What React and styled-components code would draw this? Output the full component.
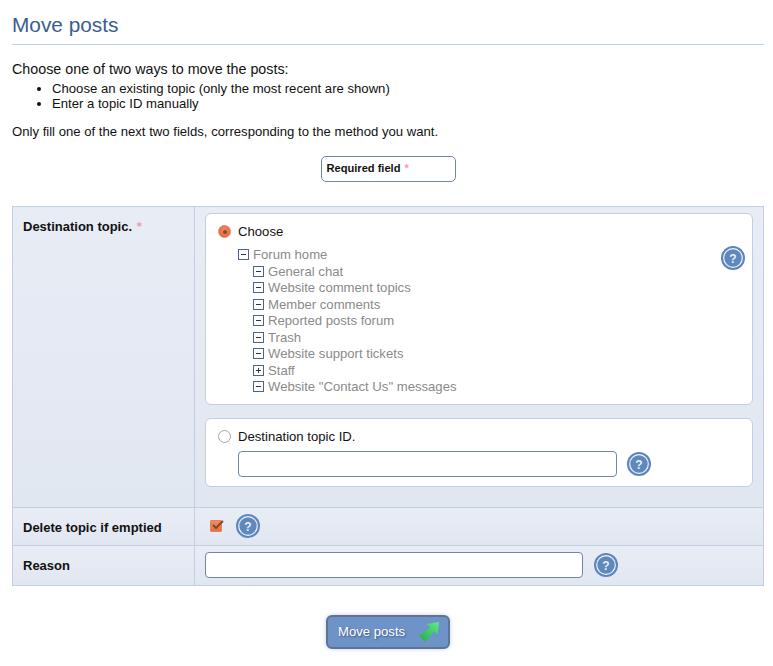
import React from 'react';
import styled, { createGlobalStyle } from 'styled-components';

const Global = createGlobalStyle`
  html, body { margin: 0; padding: 0; background: #fff; }
  body { font-family: "Liberation Sans", Arial, sans-serif; font-size: 13.13px; color: #111; }
`;
const Page = styled.div`
  padding: 13px 9px 0 12px;
  width: 773px; height: 666px; box-sizing: border-box; overflow: hidden;
`;
const Title = styled.h1`
  margin: 0 0 16px; padding: 0 0 8px;
  font-size: 20.8px; line-height: 23px; font-weight: 400; color: #395d92;
  border-bottom: 1px solid #bcd0e6;
`;
const Lead = styled.p`
  margin: 0 0 4px; font-size: 14.3px; line-height: 16px; color: #111;
`;
const Bullets = styled.ul`
  margin: 0 0 13px; padding: 0 0 0 40px;
  line-height: 15px;
`;
const Note = styled.p`
  margin: 0 0 17px; line-height: 15px;
`;
const RequiredWrap = styled.div`
  display: flex; justify-content: center; margin-bottom: 24px;
`;
const RequiredBox = styled.div`
  width: 135px; height: 26px; box-sizing: border-box;
  border: 1px solid #6f87a8; border-radius: 5px;
  padding: 4px 5px; font-size: 11.1px; line-height: 14px; font-weight: 700; color: #111;
`;
const Star = styled.span`
  color: #f0a0a0; font-weight: 700; margin-left: 1px;
`;
const Table = styled.div`
  display: grid; grid-template-columns: 182px 1fr;
  border: 1px solid #c2cfe2;
`;
const Label = styled.div`
  padding: ${p => p.$pad};
  font-size: 13px; line-height: 15px; font-weight: 700; color: #111;
  background: linear-gradient(#e8ecf5, #e1e7f1);
  border-right: 1px solid #c2cfe2;
  border-top: ${p => (p.$first ? 'none' : '1px solid #c2cfe2')};
`;
const Cell = styled.div`
  padding: ${p => p.$pad || '0 10px'};
  background: linear-gradient(#e8ecf5, #e1e7f1);
  border-top: ${p => (p.$first ? 'none' : '1px solid #c2cfe2')};
  display: ${p => (p.$stack ? 'block' : 'flex')};
  align-items: center;
  gap: ${p => p.$gap || '0'};
  box-sizing: border-box;
`;
const Panel = styled.div`
  position: relative;
  background: #fff; border: 1px solid #c2cfe2; border-radius: 6px;
  box-sizing: border-box;
  padding: ${p => p.$pad};
  margin-bottom: ${p => p.$mb || '0'};
`;
const RadioRow = styled.div`
  display: flex; align-items: center; gap: 7px;
  line-height: 15px; color: #111;
`;
const Radio = styled.span`
  width: 13px; height: 13px; border-radius: 50%; box-sizing: border-box; flex: none;
  display: inline-flex; align-items: center; justify-content: center;
  background: ${p => (p.$on ? 'radial-gradient(circle at 50% 40%, #f08a5e, #e2623a)' : '#fff')};
  border: 1px solid ${p => (p.$on ? '#e0845f' : '#a8a8a8')};
  &::after {
    content: ''; width: 4px; height: 4px; border-radius: 50%;
    background: ${p => (p.$on ? '#8a4a30' : 'transparent')};
  }
`;
const Tree = styled.div`
  margin: 7.5px 0 0 20px; color: #8a8a8a;
`;
const TreeRow = styled.div`
  display: flex; align-items: center; gap: 4px;
  height: 16.5px; padding-left: ${p => (p.$depth ? '15px' : '0')};
`;
const Toggle = styled.span`
  width: 11px; height: 11px; box-sizing: border-box; flex: none;
  border: 1px solid #4a6390; position: relative; background: #fff;
  &::before { content: ''; position: absolute; left: 2px; right: 2px; top: 4px; height: 1px; background: #334; }
  &::after {
    content: ''; position: absolute; top: 2px; bottom: 2px; left: 4px; width: 1px; background: #334;
    display: ${p => (p.$plus ? 'block' : 'none')};
  }
`;
const HelpFloat = styled.div`
  position: absolute; right: 7px; top: 32px;
`;
const InputRow = styled.div`
  display: flex; align-items: center; gap: 10px; margin: 7px 0 0 20px;
`;
const TextInput = styled.input`
  width: ${p => p.$w}; height: 26px; box-sizing: border-box;
  border: 1px solid #6f87a8; border-radius: 4px; background: #fff; padding: 0 4px; outline: none;
  flex: none;
`;
const Check = styled.span`
  width: 12px; height: 12px; box-sizing: border-box; border-radius: 1px; flex: none; margin-left: 5px;
  background: linear-gradient(#f08a5e, #e66e42); border: 1px solid #e0845f; position: relative; display: inline-block;
  & svg { position: absolute; left: -1px; top: -3px; }
`;
const Actions = styled.div`
  display: flex; justify-content: center; margin-top: 29px;
`;
const Submit = styled.button`
  width: 124px; height: 34px; box-sizing: border-box; padding: 0 0 0 10px;
  display: flex; align-items: center; justify-content: space-between;
  font-family: inherit; font-size: 13.13px; color: #fff;
  text-shadow: 1px 1px 2px #3f5378;
  background: #6e93c9; border: 2px solid #5f7392; border-radius: 6px;
  box-shadow: 0 0 4px #c2cfe2;
`;

const Help = () => (
  <svg width="24" height="24" viewBox="0 0 24 24" style={{ flex: 'none', display: 'block' }}>
    <circle cx="12" cy="12" r="12" fill="#5a85bd" />
    <circle cx="12" cy="12" r="9.3" fill="#5f88bd" stroke="#eef3fa" strokeWidth="1.2" />
    <text x="12" y="16.5" textAnchor="middle" fontFamily="Liberation Sans" fontWeight="700" fontSize="12" fill="#e8eef8">?</text>
  </svg>
);

const Arrow = () => (
  <svg width="20" height="20" viewBox="0 0 20 20" style={{ marginRight: 9 }}>
    <defs>
      <linearGradient id="ag" x1="0" y1="1" x2="1" y2="0">
        <stop offset="0" stopColor="#1fae3f" />
        <stop offset="1" stopColor="#62ea8a" />
      </linearGradient>
    </defs>
    <path d="M20 0 L7.5 2 L11.5 5.5 L0 14 L6.5 20 L15 9 L18.5 12.5 Z" fill="url(#ag)" />
  </svg>
);

const forums = ['General chat', 'Website comment topics', 'Member comments', 'Reported posts forum', 'Trash', 'Website support tickets', 'Staff', 'Website "Contact Us" messages'];

export default function App() {
  return (
    <Page>
      <Global />
      <Title>Move posts</Title>
      <Lead>Choose one of two ways to move the posts:</Lead>
      <Bullets>
        <li>Choose an existing topic (only the most recent are shown)</li>
        <li>Enter a topic ID manually</li>
      </Bullets>
      <Note>Only fill one of the next two fields, corresponding to the method you want.</Note>
      <RequiredWrap>
        <RequiredBox>Required field <Star>*</Star></RequiredBox>
      </RequiredWrap>
      <Table>
        <Label $first $pad="12px 10px">Destination topic. <Star>*</Star></Label>
        <Cell $first $stack $pad="6px 10px 20px">
          <Panel $pad="10px 12px 8.5px" $mb="13px">
            <RadioRow><Radio $on />Choose</RadioRow>
            <Tree>
              <TreeRow><Toggle />Forum home</TreeRow>
              {forums.map(f => (
                <TreeRow $depth key={f}><Toggle $plus={f === 'Staff'} />{f}</TreeRow>
              ))}
            </Tree>
            <HelpFloat><Help /></HelpFloat>
          </Panel>
          <Panel $pad="10px 12px 9px">
            <RadioRow><Radio />Destination topic ID.</RadioRow>
            <InputRow><TextInput $w="379px" /><Help /></InputRow>
          </Panel>
        </Cell>
        <Label $pad="12px 10px 10px">Delete topic if emptied</Label>
        <Cell $gap="14px"><Check>
          <svg width="14" height="14" viewBox="0 0 14 14"><path d="M3 7 L6 10 L13 3" fill="none" stroke="#7a4630" strokeWidth="1.8" /></svg>
        </Check><Help /></Cell>
        <Label $pad="12px 10px">Reason</Label>
        <Cell $gap="11px"><TextInput $w="378px" /><Help /></Cell>
      </Table>
      <Actions>
        <Submit>Move posts<Arrow /></Submit>
      </Actions>
    </Page>
  );
}
